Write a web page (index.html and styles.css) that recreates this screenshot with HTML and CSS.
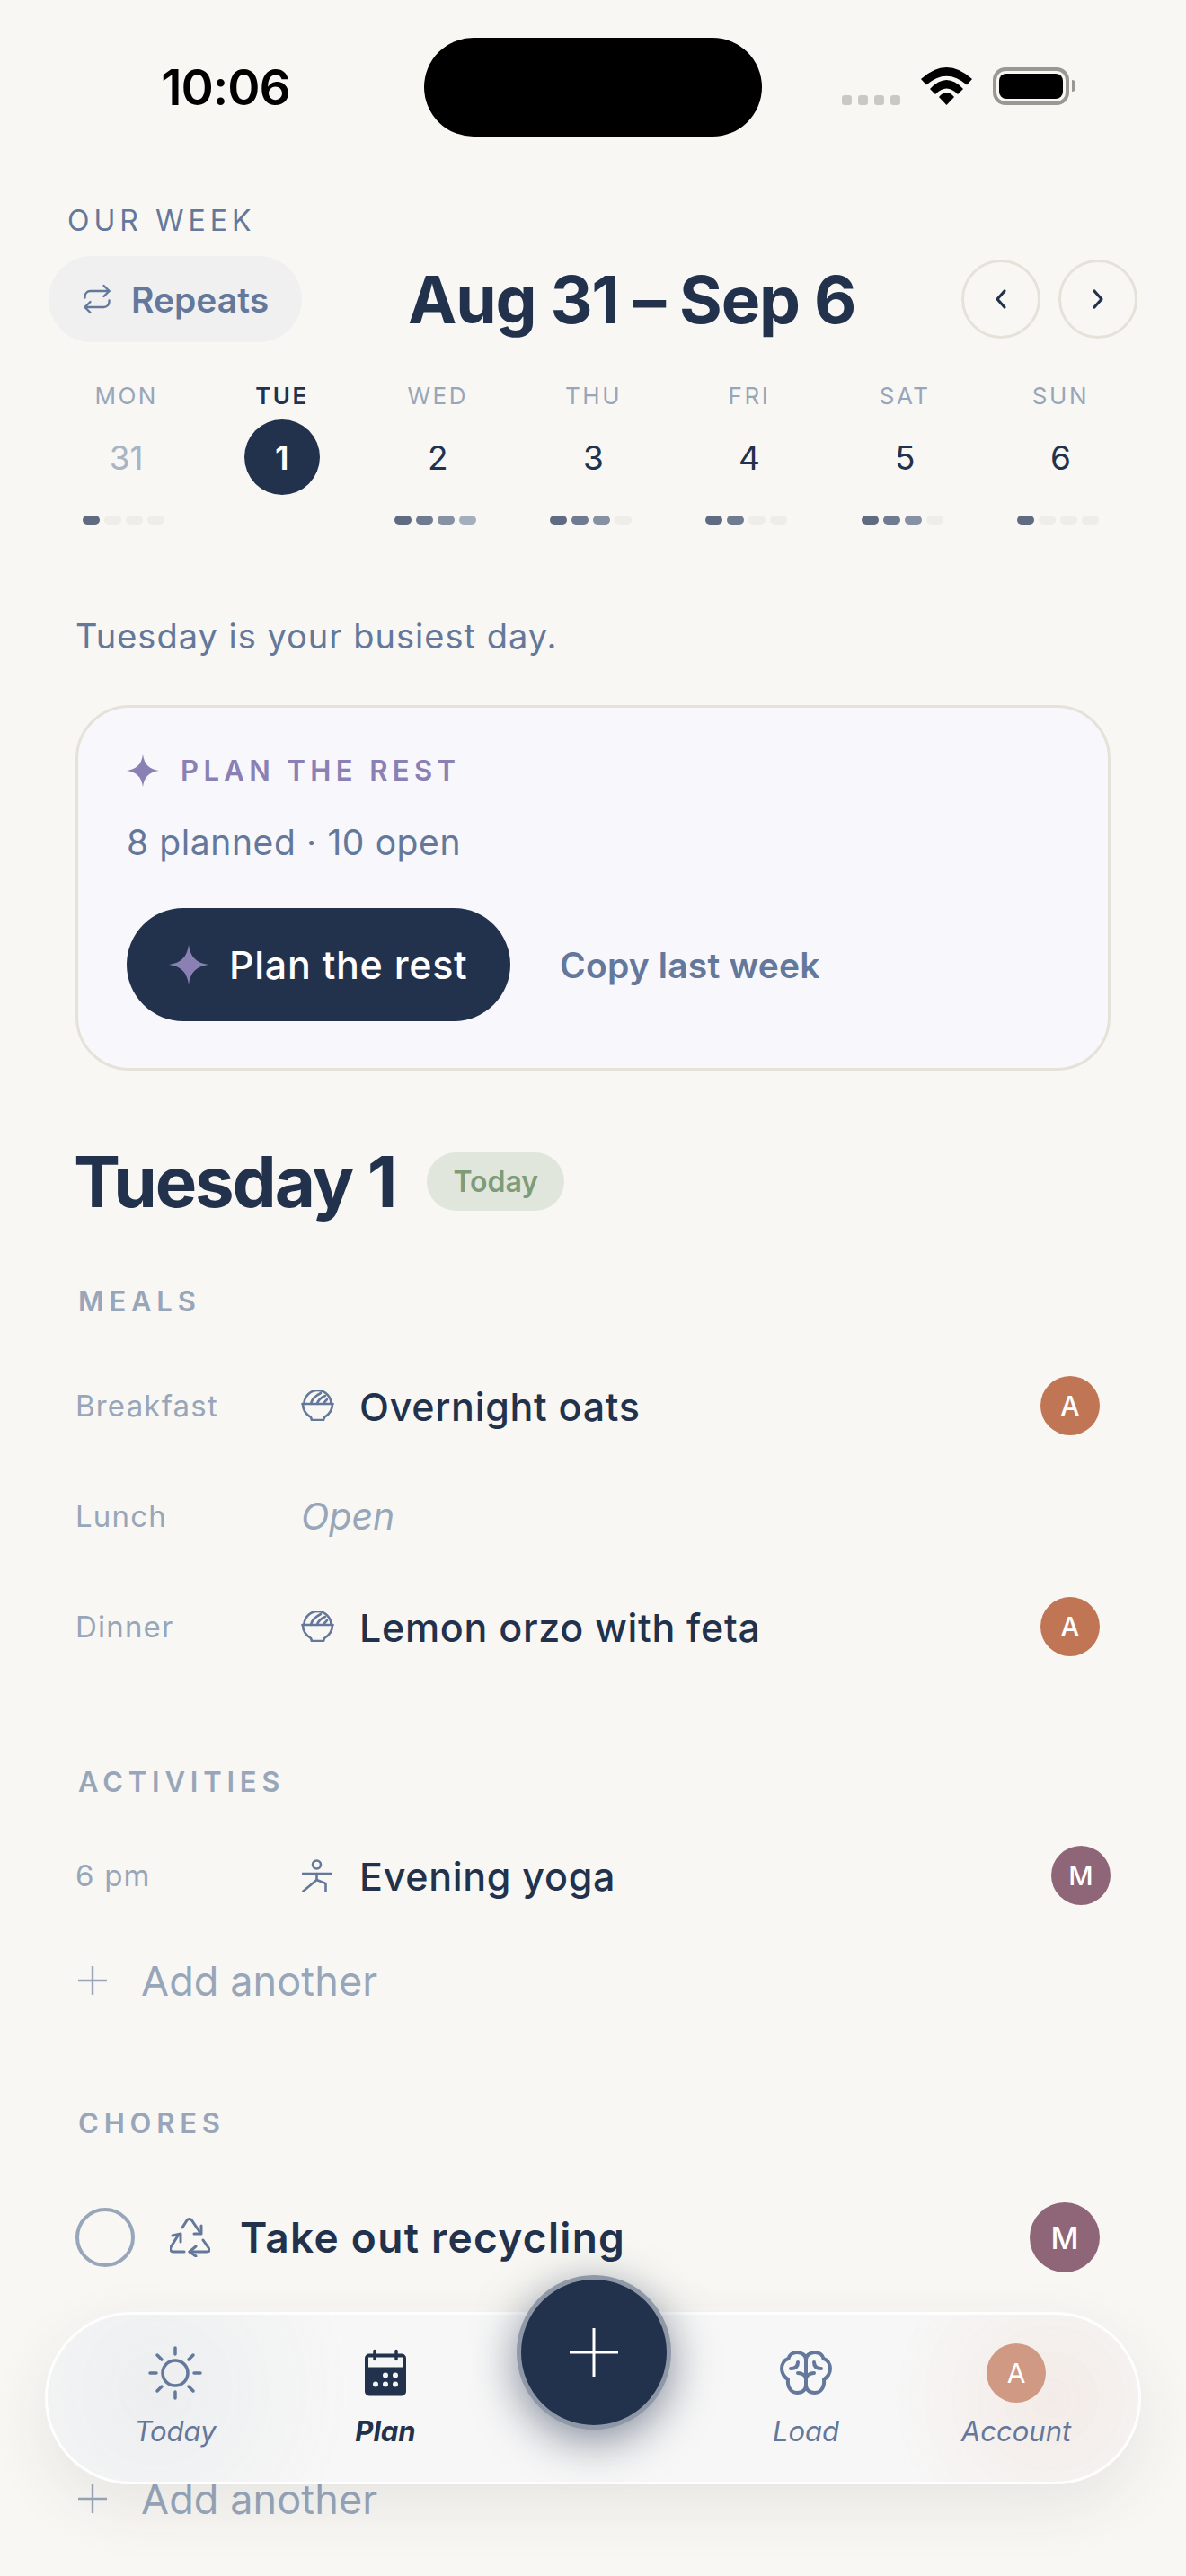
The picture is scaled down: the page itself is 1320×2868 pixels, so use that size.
FILE: index.html
```html
<!DOCTYPE html>
<html lang="en">
<head>
    <meta charset="UTF-8">
    <meta name="viewport" content="width=device-width, initial-scale=1.0">
    <title>Our Week</title>
    <link rel="stylesheet" href="styles.css">
</head>
<body>
    <div class="phone">
        <!-- Status bar -->
        <div class="status-bar">
            <div class="status-time">10:06</div>
            <div class="island"></div>
            <div class="status-icons">
                <div class="signal"><span></span><span></span><span></span><span></span></div>
                <svg class="wifi" width="57" height="42" viewBox="0 0 57 42"><path d="M0 13Q28.5-13 57 13L51 19.5Q28.5 0 6 19.5Z"/><path d="M10 24Q28.5 4 47 24L41 30Q28.5 17 16 30Z"/><path d="M20 33Q28.5 23 37 33L28.5 42Z"/></svg>
                <div class="battery"><div class="battery-fill"></div></div>
                <div class="battery-nub"></div>
            </div>
        </div>

        <!-- Week header -->
        <div class="week-label">OUR WEEK</div>
        <div class="week-header">
            <div class="repeats">
                <svg width="36" height="36" viewBox="0 0 24 24" class="line-icon"><path d="m17 2 4 4-4 4"/><path d="M3 11v-1a4 4 0 0 1 4-4h14"/><path d="m7 22-4-4 4-4"/><path d="M21 13v1a4 4 0 0 1-4 4H3"/></svg>
                <span>Repeats</span>
            </div>
            <h1 class="week-title">Aug 31 – Sep 6</h1>
            <div class="week-arrows">
                <div class="arrow"><svg width="14" height="24" viewBox="0 0 14 24"><path d="M11 3 3 12l8 9"/></svg></div>
                <div class="arrow"><svg width="14" height="24" viewBox="0 0 14 24"><path d="m3 3 8 9-8 9"/></svg></div>
            </div>
        </div>

        <!-- Days -->
        <div class="days">
            <div class="day">
                <div class="day-name">MON</div>
                <div class="day-num past">31</div>
                <div class="dots"><i class="d1"></i><i></i><i></i><i></i></div>
            </div>
            <div class="day active">
                <div class="day-name">TUE</div>
                <div class="day-num">1</div>
                <div class="dots"></div>
            </div>
            <div class="day">
                <div class="day-name">WED</div>
                <div class="day-num">2</div>
                <div class="dots"><i class="d1"></i><i class="d2"></i><i class="d3"></i><i class="d4"></i></div>
            </div>
            <div class="day">
                <div class="day-name">THU</div>
                <div class="day-num">3</div>
                <div class="dots"><i class="d1"></i><i class="d2"></i><i class="d3"></i><i></i></div>
            </div>
            <div class="day">
                <div class="day-name">FRI</div>
                <div class="day-num">4</div>
                <div class="dots"><i class="d1"></i><i class="d2"></i><i></i><i></i></div>
            </div>
            <div class="day">
                <div class="day-name">SAT</div>
                <div class="day-num">5</div>
                <div class="dots"><i class="d1"></i><i class="d2"></i><i class="d3"></i><i></i></div>
            </div>
            <div class="day">
                <div class="day-name">SUN</div>
                <div class="day-num">6</div>
                <div class="dots"><i class="d1"></i><i></i><i></i><i></i></div>
            </div>
        </div>

        <div class="content">
            <p class="busy-note">Tuesday is your busiest day.</p>

            <!-- Plan card -->
            <div class="plan-card">
                <div class="plan-eyebrow">
                    <svg width="36" height="36" viewBox="0 0 36 36" class="star"><path d="M18 0C19.5 11 25 16.5 36 18 25 19.5 19.5 25 18 36 16.500 25 11 19.500 0 18 11 16.500 16.500 11 18 0Z"/></svg>
                    <span>PLAN THE REST</span>
                </div>
                <div class="plan-count">8 planned · 10 open</div>
                <div class="plan-actions">
                    <div class="btn-plan">
                        <svg width="44" height="44" viewBox="0 0 36 36" class="star"><path d="M18 0C19.5 11 25 16.5 36 18 25 19.5 19.5 25 18 36 16.500 25 11 19.500 0 18 11 16.500 16.500 11 18 0Z"/></svg>
                        <span>Plan the rest</span>
                    </div>
                    <div class="btn-copy">Copy last week</div>
                </div>
            </div>

            <div class="day-heading">
                <h2>Tuesday 1</h2>
                <span class="badge-today">Today</span>
            </div>

            <!-- Meals -->
            <h3 class="section-label">MEALS</h3>
            <div class="row inset">
                <div class="row-label">Breakfast</div>
                <svg class="line-icon thick" width="37" height="34" viewBox="0 0 37 34"><path d="M3.500 15A15 15 0 0 1 33.500 15"/><path d="M1.500 15H35.500"/><path d="M2 15c0 8 4 12 9 15l1 3h13l1-3c5-3 9-7 9-15"/><path d="M11 15c1-5 5-9 11-12"/><path d="M18 15c1-4 4-7 9-9"/><path d="M25 15c1-2 2-3 4-5"/></svg>
                <div class="row-text">Overnight oats</div>
                <div class="avatar a-terra">A</div>
            </div>
            <div class="row inset">
                <div class="row-label">Lunch</div>
                <div class="row-open">Open</div>
            </div>
            <div class="row inset">
                <div class="row-label">Dinner</div>
                <svg class="line-icon thick" width="37" height="34" viewBox="0 0 37 34"><path d="M3.500 15A15 15 0 0 1 33.500 15"/><path d="M1.500 15H35.500"/><path d="M2 15c0 8 4 12 9 15l1 3h13l1-3c5-3 9-7 9-15"/><path d="M11 15c1-5 5-9 11-12"/><path d="M18 15c1-4 4-7 9-9"/><path d="M25 15c1-2 2-3 4-5"/></svg>
                <div class="row-text">Lemon orzo with feta</div>
                <div class="avatar a-terra">A</div>
            </div>

            <!-- Activities -->
            <h3 class="section-label activities">ACTIVITIES</h3>
            <div class="row">
                <div class="row-label">6 pm</div>
                <svg class="line-icon thick yoga-icon" width="33" height="36" viewBox="0 0 33 36"><circle cx="16.500" cy="6" r="4.500"/><path d="M0 16H33"/><path d="M16.500 16v7L1 36"/><path d="M16.500 23l10 4v9"/></svg>
                <div class="row-text">Evening yoga</div>
                <div class="avatar a-plum">M</div>
            </div>
            <div class="add-row">
                <svg width="32" height="32" viewBox="0 0 32 32"><path d="M16 0V32M0 16H32"/></svg>
                <span>Add another</span>
            </div>

            <!-- Chores -->
            <h3 class="section-label chores">CHORES</h3>
            <div class="chore inset">
                <div class="check"></div>
                <svg class="line-icon recycle" width="45" height="44" viewBox="0 0 45 44"><path d="M14 11 19 3c1.500-2 4-2 5.500 0L34 17"/><path d="M35 9v9H27"/><path d="M37 25l7 10c1 2 0 3-3 3H22"/><path d="M29 32l-7 6 7 5"/><path d="M16 38H4c-3 0-4-2-3-5L9 20"/><path d="M3 20l9-2 0 9"/></svg>
                <div class="chore-text">Take out recycling</div>
                <div class="avatar big a-plum">M</div>
            </div>
            <div class="add-row last">
                <svg width="32" height="32" viewBox="0 0 32 32"><path d="M16 0V32M0 16H32"/></svg>
                <span>Add another</span>
            </div>
        </div>

        <!-- Bottom nav -->
        <nav class="tabbar">
            <div class="tab">
                <svg class="line-icon sun" width="60" height="60" viewBox="0 0 60 60"><circle cx="30" cy="30" r="14"/><path d="M30 2v7M30 51v7M2 30h7M51 30h7M10 10l5 5M45 45l5 5M10 50l5-5M45 15l5-5"/></svg>
                <span>Today</span>
            </div>
            <div class="tab current">
                <svg width="46" height="51" viewBox="0 0 46 51"><rect x="0" y="4" width="46" height="47" rx="5" fill="#22324d"/><rect x="4" y="8" width="38" height="11" fill="#f4f5f5"/><path d="M11 1v9M35 1v9" stroke="#22324d" stroke-width="3.500" stroke-linecap="round"/><g fill="#f4f5f5"><circle cx="23" cy="28" r="3"/><circle cx="34" cy="28" r="3"/><circle cx="12" cy="38" r="3"/><circle cx="23" cy="38" r="3"/><circle cx="34" cy="38" r="3"/></g></svg>
                <span>Plan</span>
            </div>
            <div class="tab-gap"></div>
            <div class="tab">
                <svg class="line-icon brain" width="58" height="50" viewBox="0 0 58 50"><g><path d="M29 10C29 5 24 2 19 2S10 5 9.500 9C5 10 2 15 2 20S5 30 9 32C8 40 12 47 19 47S29 43 29 38V10Z"/><path d="M20 13c0 5-3 7-8 7"/><path d="M29 32c0-4-4-7-9-7"/></g><g transform="matrix(-1 0 0 1 58 0)"><path d="M29 10C29 5 24 2 19 2S10 5 9.500 9C5 10 2 15 2 20S5 30 9 32C8 40 12 47 19 47S29 43 29 38V10Z"/><path d="M20 13c0 5-3 7-8 7"/><path d="M29 32c0-4-4-7-9-7"/></g></svg>
                <span>Load</span>
            </div>
            <div class="tab">
                <div class="avatar tab-avatar">A</div>
                <span>Account</span>
            </div>
            <div class="fab"><svg width="54" height="54" viewBox="0 0 54 54"><path d="M27 0V54M0 27H54"/></svg></div>
        </nav>
    </div>
</body>
</html>
```

FILE: styles.css
```css
* {
    box-sizing: border-box;
}

body {
    margin: 0;
    padding: 0;
    font-family: Inter, "Liberation Sans", sans-serif;
    background-color: #f8f7f3;
    color: #22324d;
}

h1, h2, h3, p {
    margin: 0;
}

.phone {
    position: relative;
    width: 1320px;
    height: 2868px;
    overflow: hidden;
    background-color: #f8f7f3;
}

.line-icon {
    fill: none;
    stroke: #64789b;
    stroke-width: 1.6;
    stroke-linecap: round;
    stroke-linejoin: round;
    flex-shrink: 0;
}

.line-icon.thick {
    stroke-width: 2.600;
}

.star {
    fill: #8b80b3;
    flex-shrink: 0;
}

/* Status bar */
.status-bar {
    display: flex;
    height: 152px;
    padding-top: 42px;
}

.status-time {
    width: 472px;
    text-align: center;
    font-size: 55px;
    font-weight: 600;
    line-height: 110px;
    letter-spacing: -1px;
    color: #000;
    padding-left: 30px;
}

.island {
    width: 376px;
    height: 110px;
    background-color: #000;
    border-radius: 55px;
}

.status-icons {
    display: flex;
    align-items: flex-end;
    height: 75px;
    margin-left: 89px;
}

.signal {
    display: flex;
    gap: 7px;
    margin-right: 23px;
}

.signal span {
    width: 11px;
    height: 11px;
    border-radius: 3px;
    background-color: #c9c8c3;
}

.wifi {
    margin-right: 23px;
}

.battery {
    width: 85px;
    height: 42px;
    border: 4px solid #9a9893;
    border-radius: 14px;
    padding: 3px;
}

.battery-fill {
    height: 100%;
    background-color: #000;
    border-radius: 8px;
}

.battery-nub {
    width: 4px;
    height: 13px;
    margin: 0 0 15px 3px;
    background-color: #9a9893;
    border-radius: 0 4px 4px 0;
}

/* Week header */
.week-label {
    margin-top: 76px;
    padding-left: 75px;
    font-size: 32px;
    line-height: 36px;
    letter-spacing: 5px;
    color: #64789b;
}

.week-header {
    display: flex;
    justify-content: space-between;
    align-items: center;
    margin-top: 21px;
    padding: 0 54px;
}

.repeats {
    display: flex;
    align-items: center;
    gap: 20px;
    width: 282px;
    height: 96px;
    padding-left: 36px;
    border-radius: 48px;
    background-color: #eff0ef;
    font-size: 39px;
    font-weight: 600;
    color: #64789b;
}

.week-title {
    padding-top: 2px;
    font-size: 73px;
    font-weight: 700;
    line-height: 94px;
    letter-spacing: -1.200px;
    white-space: nowrap;
}

.week-arrows {
    display: flex;
    gap: 20px;
}

.arrow {
    display: flex;
    align-items: center;
    justify-content: center;
    width: 88px;
    height: 88px;
    border: 3px solid #e5e2da;
    border-radius: 50%;
}

.arrow svg {
    fill: none;
    stroke: #22324d;
    stroke-width: 3.200;
    stroke-linecap: round;
    stroke-linejoin: round;
}

/* Days */
.days {
    display: grid;
    grid-template-columns: repeat(7, 173.300px);
    margin-top: 41px;
    padding-left: 54px;
}

.day {
    display: flex;
    flex-direction: column;
    align-items: center;
}

.day-name {
    font-size: 26px;
    line-height: 38px;
    letter-spacing: 2.500px;
    color: #98a6ba;
}

.day-num {
    display: flex;
    align-items: center;
    justify-content: center;
    width: 84px;
    height: 84px;
    margin-top: 7px;
    border-radius: 50%;
    font-size: 37px;
}

.day-num.past {
    color: #a9b4c4;
}

.active .day-name {
    color: #22324d;
    font-weight: 600;
}

.active .day-num {
    background-color: #22324d;
    color: #fff;
    font-weight: 600;
}

.dots {
    display: flex;
    gap: 5px;
    height: 10px;
    margin-top: 23px;
    margin-right: 6px;
}

.dots i {
    width: 19px;
    height: 10px;
    border-radius: 5px;
    background-color: #eeede7;
}

.dots .d1 {
    background-color: #5f6b81;
}

.dots .d2 {
    background-color: #6f7b90;
}

.dots .d3 {
    background-color: #8691a4;
}

.dots .d4 {
    background-color: #a5aebc;
}

/* Content */
.content {
    padding: 0 84px;
}

.busy-note {
    margin-top: 100px;
    font-size: 38px;
    line-height: 48px;
    letter-spacing: 1px;
    color: #64789b;
}

.plan-card {
    height: 407px;
    margin-top: 53px;
    padding: 51px 54px 0;
    background-color: #f7f7fc;
    border: 3px solid #e5e2da;
    border-radius: 60px;
}

.plan-eyebrow {
    display: flex;
    align-items: center;
    gap: 24px;
    font-size: 31px;
    font-weight: 600;
    letter-spacing: 5.400px;
    color: #8b80b3;
}

.plan-count {
    margin-top: 38px;
    font-size: 39px;
    line-height: 48px;
    letter-spacing: 0.600px;
    color: #64789b;
}

.plan-actions {
    display: flex;
    align-items: center;
    gap: 55px;
    margin-top: 49px;
}

.btn-plan {
    display: flex;
    align-items: center;
    gap: 23px;
    width: 427px;
    height: 126px;
    padding-left: 47px;
    border-radius: 63px;
    background-color: #22324d;
    color: #fff;
    font-size: 43px;
    font-weight: 500;
    letter-spacing: 0.700px;
}

.btn-copy {
    font-size: 39px;
    font-weight: 600;
    letter-spacing: 0.200px;
    color: #64789b;
}

.day-heading {
    display: flex;
    align-items: center;
    gap: 35px;
    margin-top: 90px;
    margin-left: -2px;
    height: 66px;
}

.day-heading h2 {
    font-size: 78px;
    font-weight: 700;
    letter-spacing: -2.100px;
    white-space: nowrap;
}

.badge-today {
    display: flex;
    align-items: center;
    justify-content: center;
    width: 153px;
    height: 65px;
    border-radius: 33px;
    background-color: #e1e6dd;
    color: #7f9b77;
    font-size: 32px;
    font-weight: 600;
}

.section-label {
    margin-top: 83px;
    padding-left: 3px;
    font-size: 31px;
    font-weight: 600;
    line-height: 36px;
    letter-spacing: 5.800px;
    color: #98a6ba;
}

.section-label.activities {
    margin-top: 94px;
}

.section-label.chores {
    margin-top: 109px;
}

.row {
    display: flex;
    align-items: center;
    height: 123px;
}

.section-label + .row {
    margin-top: 36px;
}

.section-label.activities + .row {
    margin-top: 24px;
}

.inset {
    padding-right: 12px;
}

.row-label {
    width: 251px;
    flex-shrink: 0;
    font-size: 33px;
    letter-spacing: 1.200px;
    color: #98a6ba;
}

.row-text {
    flex: 1;
    margin-left: 28px;
    padding-top: 2px;
    font-size: 43px;
    font-weight: 450;
    line-height: 52px;
    letter-spacing: 0.700px;
}

.yoga-icon {
    margin: 0 3px 0 1px;
}

.row-open {
    font-size: 41px;
    font-style: italic;
    color: #98a6ba;
}

.avatar {
    display: flex;
    align-items: center;
    justify-content: center;
    width: 66px;
    height: 66px;
    flex-shrink: 0;
    border-radius: 50%;
    color: #fff;
    font-size: 30px;
    font-weight: 500;
}

.avatar.big {
    width: 78px;
    height: 78px;
    font-size: 34px;
}

.a-terra {
    background-color: #c07555;
}

.a-plum {
    background-color: #8f6678;
}

.add-row {
    display: flex;
    align-items: center;
    gap: 38px;
    height: 64px;
    margin-top: 24px;
    padding-left: 3px;
    font-size: 45px;
    letter-spacing: 0.100px;
    color: #98a6ba;
}

.add-row svg {
    fill: none;
    stroke: #98a6ba;
    stroke-width: 2.400;
    flex-shrink: 0;
}

.chore {
    display: flex;
    align-items: center;
    height: 78px;
    margin-top: 70px;
}

.check {
    width: 66px;
    height: 66px;
    flex-shrink: 0;
    border: 4px solid #98a6ba;
    border-radius: 50%;
}

.recycle {
    margin-left: 39px;
    stroke-width: 3;
}

.chore-text {
    flex: 1;
    margin-left: 33px;
    font-size: 46px;
    font-weight: 600;
    line-height: 56px;
    letter-spacing: 1.300px;
}

.add-row.last {
    margin-top: 220px;
}

/* Bottom nav */
.tabbar {
    position: absolute;
    left: 50px;
    top: 2574px;
    display: grid;
    grid-template-columns: repeat(5, 234px);
    width: 1220px;
    height: 192px;
    padding: 32px 25px 0;
    border: 3px solid rgba(255, 255, 255, 0.9);
    border-radius: 96px;
    background:
        radial-gradient(circle at 10% 45%, rgba(232, 234, 236, 0.7), transparent 20%),
        radial-gradient(circle at 92% 50%, rgba(242, 232, 227, 0.8), transparent 16%),
        rgba(246, 246, 246, 0.94);
    box-shadow: 0 24px 70px rgba(60, 60, 60, 0.09);
}

.tab {
    display: flex;
    flex-direction: column;
    align-items: center;
    font-size: 31px;
    font-style: italic;
    color: #64789b;
}

.tab svg,
.tab-avatar {
    height: 66px;
    flex-shrink: 0;
}

.tab span {
    margin-top: 12px;
    line-height: 40px;
}

.tab.current {
    color: #22324d;
    font-weight: 700;
}

.sun {
    stroke-width: 3.500;
}

.brain {
    stroke-width: 4;
}

.tab-avatar {
    background-color: #cf9984;
    font-style: normal;
    font-weight: 400;
}

.fab {
    position: absolute;
    left: 522px;
    top: -44px;
    display: flex;
    align-items: center;
    justify-content: center;
    width: 172px;
    height: 172px;
    border: 5px solid #8e98a6;
    border-radius: 50%;
    background-color: #22324d;
    box-shadow: 0 12px 50px rgba(34, 50, 77, 0.55);
}

.fab svg {
    fill: none;
    stroke: #fff;
    stroke-width: 3;
}
```
